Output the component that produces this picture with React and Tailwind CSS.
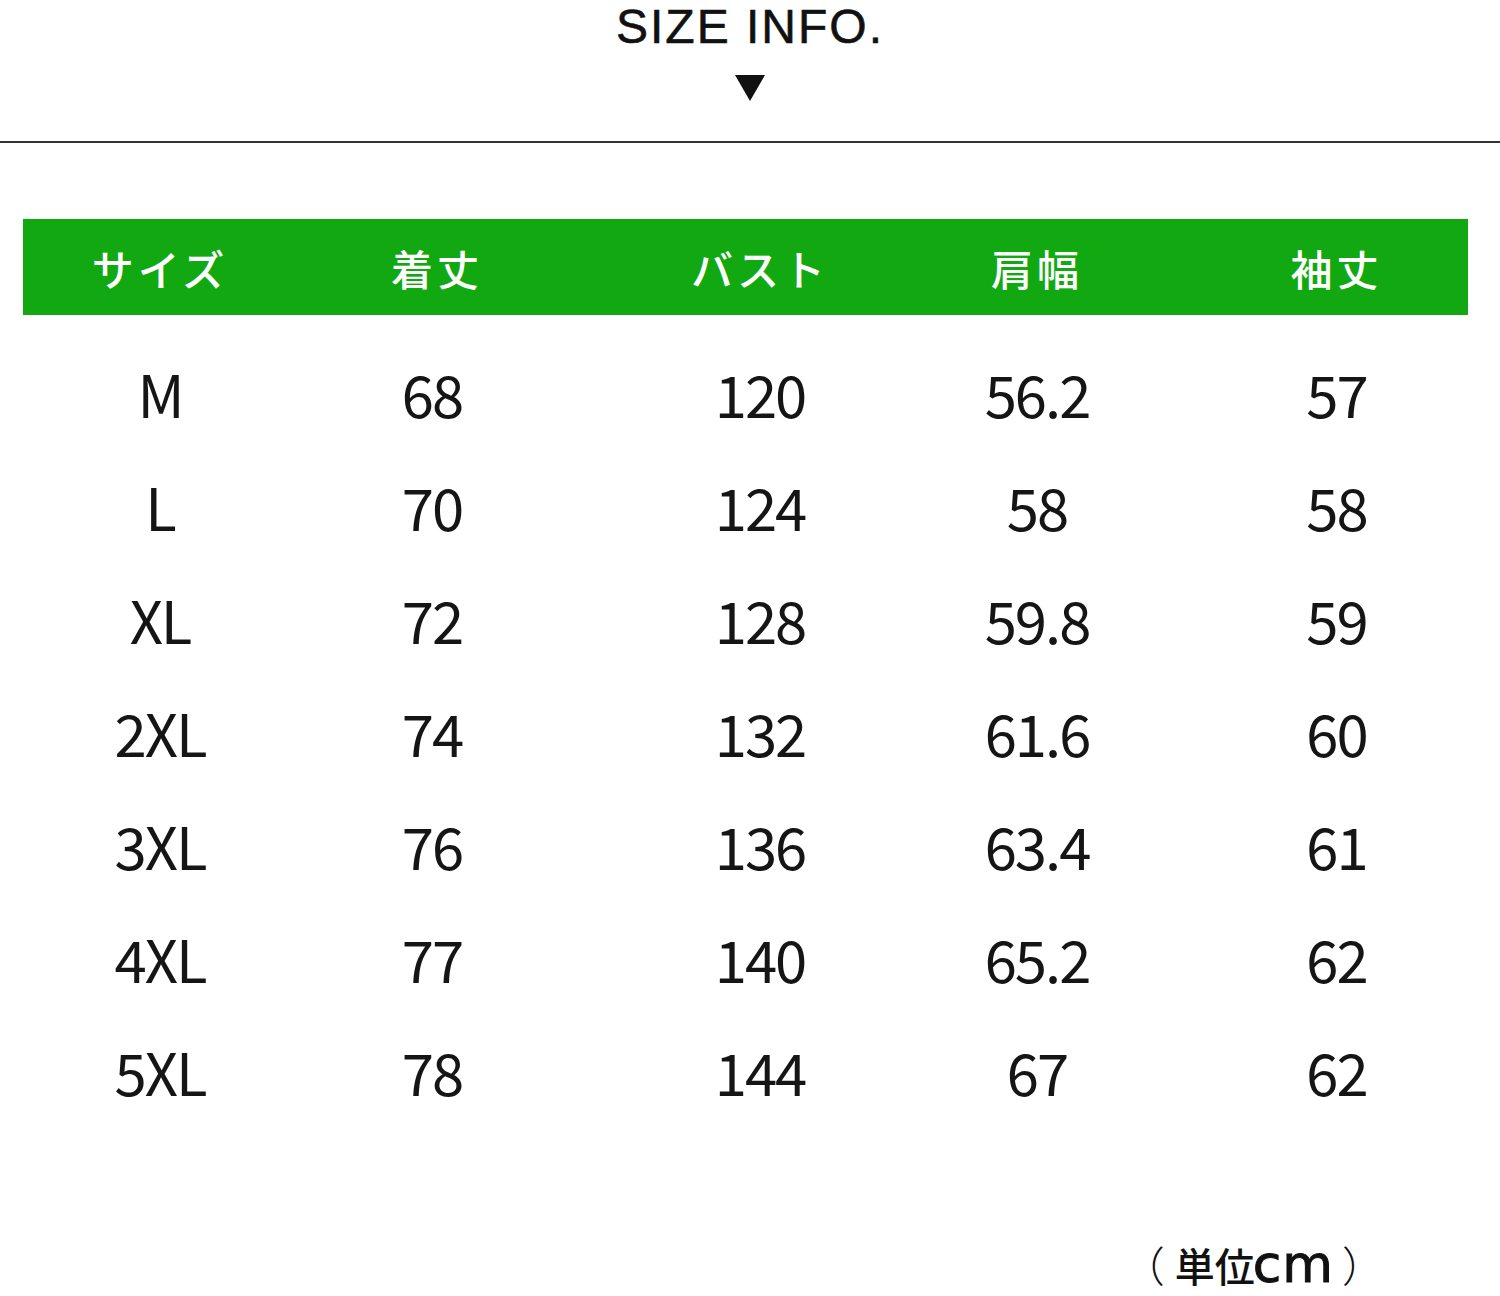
import React from 'react';

const headers = ['サイズ', '着丈', 'バスト', '肩幅', '袖丈'];

const rows = [
  ['M', '68', '120', '56.2', '57'],
  ['L', '70', '124', '58', '58'],
  ['XL', '72', '128', '59.8', '59'],
  ['2XL', '74', '132', '61.6', '60'],
  ['3XL', '76', '136', '63.4', '61'],
  ['4XL', '77', '140', '65.2', '62'],
  ['5XL', '78', '144', '67', '62'],
];

// column widths tuned so that each label sits on the same centre line as in the sheet
const cols = 'grid grid-cols-[274px_280px_366px_188px_1fr]';

function Cell({i, children, head}) {
  let extra = '';
  if (i === 4) extra = 'pl-[74px]';
  if (i === 1 && !head) extra = 'pr-[10px]';
  return <div className={`text-center ${extra}`}>{children}</div>;
}

export default function App() {
  return (
    <div className="w-[1500px] h-[1296px] bg-white">
      <div className="flex flex-col items-center">
        <h1 className="text-[48px] leading-[54px] tracking-[2px] text-[#111] [-webkit-text-stroke:0.6px_#111] font-['Liberation_Sans',Arial,sans-serif]">
          SIZE INFO.
        </h1>
        <svg width="30" height="26" viewBox="0 0 30 26" className="mt-[21px]">
          <polygon points="0,0 30,0 15,26" fill="#111" />
        </svg>
      </div>
      <div className="mt-[40px] h-[2px] bg-[#333]" />

      <div className="pl-[23px] pr-[32px] mt-[76px] font-['Noto_Sans_CJK_JP',sans-serif]">
        <div className={`${cols} h-[96px] items-center bg-[#12a812] text-white text-[42px] font-medium tracking-[4px]`}>
          {headers.map((h, i) => (
            <Cell key={i} i={i} head>{h}</Cell>
          ))}
        </div>

        <div className="mt-[21px] text-[#151515] text-[58px] leading-none tracking-[-2px]">
          {rows.map((r, ri) => (
            <div key={ri} className={`${cols} h-[113px] items-center`}>
              {r.map((v, i) => (
                <Cell key={i} i={i}>{v}</Cell>
              ))}
            </div>
          ))}
        </div>

        <div className="mt-[115px] flex justify-end items-baseline pr-[84px] leading-[44px] text-[#111]">
          <span className="text-[42px] font-light">（</span>
          <span className="text-[40px] font-medium ml-[10px]">単位</span>
          <span className="text-[52px] tracking-[1px] ml-[-2px] [-webkit-text-stroke:1px_#111] font-['DejaVu_Sans',sans-serif]">cm</span>
          <span className="text-[42px] font-light ml-[8px]">）</span>
        </div>
      </div>
    </div>
  );
}
